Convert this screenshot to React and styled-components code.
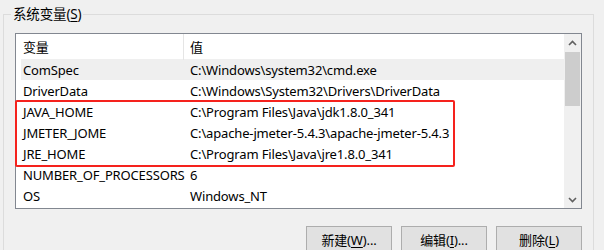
import React from 'react';
import styled, { createGlobalStyle } from 'styled-components';

const GlobalStyle = createGlobalStyle`
  html, body {
    margin: 0;
    padding: 0;
    background: #f0f0f0;
  }
  body {
    font-family: "Noto Sans", "Noto Sans CJK SC", sans-serif;
    font-size: 13px;
    letter-spacing: -0.15px;
    color: #000;
  }
`;

const rows = [
  { name: 'ComSpec', value: 'C:\\Windows\\system32\\cmd.exe', hover: true },
  { name: 'DriverData', value: 'C:\\Windows\\System32\\Drivers\\DriverData' },
  { name: 'JAVA_HOME', value: 'C:\\Program Files\\Java\\jdk1.8.0_341' },
  { name: 'JMETER_JOME', value: 'C:\\apache-jmeter-5.4.3\\apache-jmeter-5.4.3' },
  { name: 'JRE_HOME', value: 'C:\\Program Files\\Java\\jre1.8.0_341' },
  { name: 'NUMBER_OF_PROCESSORS', value: '6' },
  { name: 'OS', value: 'Windows_NT' },
];

const App = () => {
  return (
    <>
      <GlobalStyle />
      <Screen>
        <Group>
          <Legend>
            系统变量(<u>S</u>)
          </Legend>
          <ListBox>
            <ListBody>
              <HeaderRow>
                <HeaderCell $divider>变量</HeaderCell>
                <HeaderCell>值</HeaderCell>
              </HeaderRow>
              {rows.map((r) => (
                <Row key={r.name} $hover={r.hover}>
                  <Cell>{r.name}</Cell>
                  <Cell>{r.value}</Cell>
                </Row>
              ))}
            </ListBody>
            <ScrollBar>
              <ArrowBox>
                <svg width="9" height="6" viewBox="0 0 9 6">
                  <path d="M1 5 L4.5 1.5 L8 5" fill="none" stroke="#606060" strokeWidth="1.6" />
                </svg>
              </ArrowBox>
              <Thumb />
              <Track />
              <ArrowBox>
                <svg width="9" height="6" viewBox="0 0 9 6">
                  <path d="M1 1 L4.5 4.5 L8 1" fill="none" stroke="#606060" strokeWidth="1.6" />
                </svg>
              </ArrowBox>
            </ScrollBar>
            <Annotation />
          </ListBox>
          <ButtonRow>
            <Button>新建(<u>W</u>)...</Button>
            <Button>编辑(<u>I</u>)...</Button>
            <Button>删除(<u>L</u>)</Button>
          </ButtonRow>
        </Group>
      </Screen>
    </>
  );
};

export default App;

const Screen = styled.div`
  width: 604px;
  height: 250px;
  overflow: hidden;
  padding: 0 10px 0 3px;
  box-sizing: border-box;
`;

const Group = styled.fieldset`
  margin: 0;
  padding: 0 11px 20px 11px;
  border: 1px solid #dcdcdc;
  min-width: 0;
`;

const Legend = styled.legend`
  margin-left: -4px;
  padding: 0 2px;
  line-height: 28px;
  height: 28px;
  font-size: 13.5px;
  u {
    text-decoration-thickness: 1px;
    text-underline-offset: 2px;
  }
`;

const ListBox = styled.div`
  position: relative;
  margin-top: 5px;
  height: 174px;
  border: 1px solid #828790;
  background: #fff;
  display: flex;
`;

const ListBody = styled.div`
  flex: 1;
  padding-left: 5px;
  min-width: 0;
`;

const HeaderRow = styled.div`
  display: grid;
  grid-template-columns: 163px 1fr;
  height: 25px;
`;

const HeaderCell = styled.div`
  padding-left: 2px;
  line-height: 26px;
  border-right: ${({ $divider }) => ($divider ? '1px solid #e5e5e5' : 'none')};
  & + & {
    padding-left: 6px;
  }
`;

const Row = styled.div`
  display: grid;
  grid-template-columns: 163px 1fr;
  height: 21px;
  background: ${({ $hover }) => ($hover ? '#efefef' : 'transparent')};
`;

const Cell = styled.div`
  padding-left: 2px;
  line-height: 22px;
  white-space: nowrap;
  & + & {
    padding-left: 6px;
  }
`;

const ScrollBar = styled.div`
  width: 17px;
  background: #f0f0f0;
  display: flex;
  flex-direction: column;
`;

const ArrowBox = styled.div`
  height: 17px;
  display: flex;
  align-items: center;
  justify-content: center;
`;

const Thumb = styled.div`
  height: 54px;
  margin: 1px 1px 0 1px;
  background: #cdcdcd;
`;

const Track = styled.div`
  flex: 1;
`;

const Annotation = styled.div`
  position: absolute;
  left: -1px;
  top: 66px;
  width: 436px;
  height: 63px;
  border: 2.5px solid #f5221d;
  border-radius: 2px;
  pointer-events: none;
`;

const ButtonRow = styled.div`
  display: flex;
  justify-content: flex-end;
  gap: 9px;
  margin-top: 17px;
`;

const Button = styled.button`
  width: 86px;
  height: 26px;
  background: #e1e1e1;
  border: 1px solid #adadad;
  font-family: inherit;
  font-size: 13px;
  letter-spacing: inherit;
  color: #000;
  padding: 0;
  u {
    text-decoration-thickness: 1px;
    text-underline-offset: 2px;
  }
`;
